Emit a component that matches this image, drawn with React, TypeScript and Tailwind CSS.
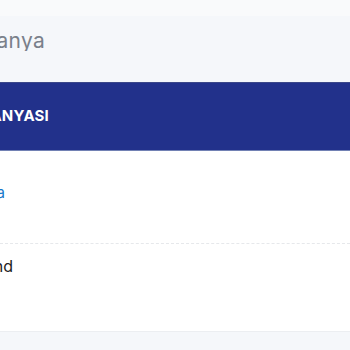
import React from "react"

function Clip({ width, children, className }: { width: number, children: React.ReactNode, className?: string }) {
  // shows only the tail of a word that runs off the left edge
  return (
    <div className="overflow-hidden" style={{ width }}>
      <div className={`flex justify-end whitespace-nowrap ${className}`}>{children}</div>
    </div>
  )
}

export default function App() {
  return (
    <div className="w-[350px] h-[350px] overflow-hidden bg-[#f5f7fa] flex flex-col" style={{ fontFamily: 'Inter, "Noto Sans", sans-serif' }}>
      <div className="h-[16px] bg-[#f9fafb] shrink-0" />
      <div className="h-[66px] shrink-0 flex items-center pb-[18px]">
        <Clip width={45} className="text-[21px] leading-none text-[#7a808a] tracking-[0.3px]">Kampanya</Clip>
      </div>
      <div className="flex flex-col bg-white border-b border-[#eceef1]">
        <div className="h-[69px] bg-[#22318b] border-t border-t-[#3b4789] border-b border-b-[#7281b4] flex items-center">
          <Clip width={49} className="text-[15px] font-bold text-white tracking-[0.2px]">KAMPANYASI</Clip>
        </div>
        <div className="h-[93px] border-b border-dashed border-[#e6e8eb] flex pt-[34px]">
          <Clip width={5} className="text-[15px] text-[#1677c9] leading-none">Kampanya</Clip>
        </div>
        <div className="h-[87px] flex pt-[14px]">
          <Clip width={13} className="text-[16px] text-[#222] leading-none">Kampanya Grand</Clip>
        </div>
      </div>
    </div>
  )
}
